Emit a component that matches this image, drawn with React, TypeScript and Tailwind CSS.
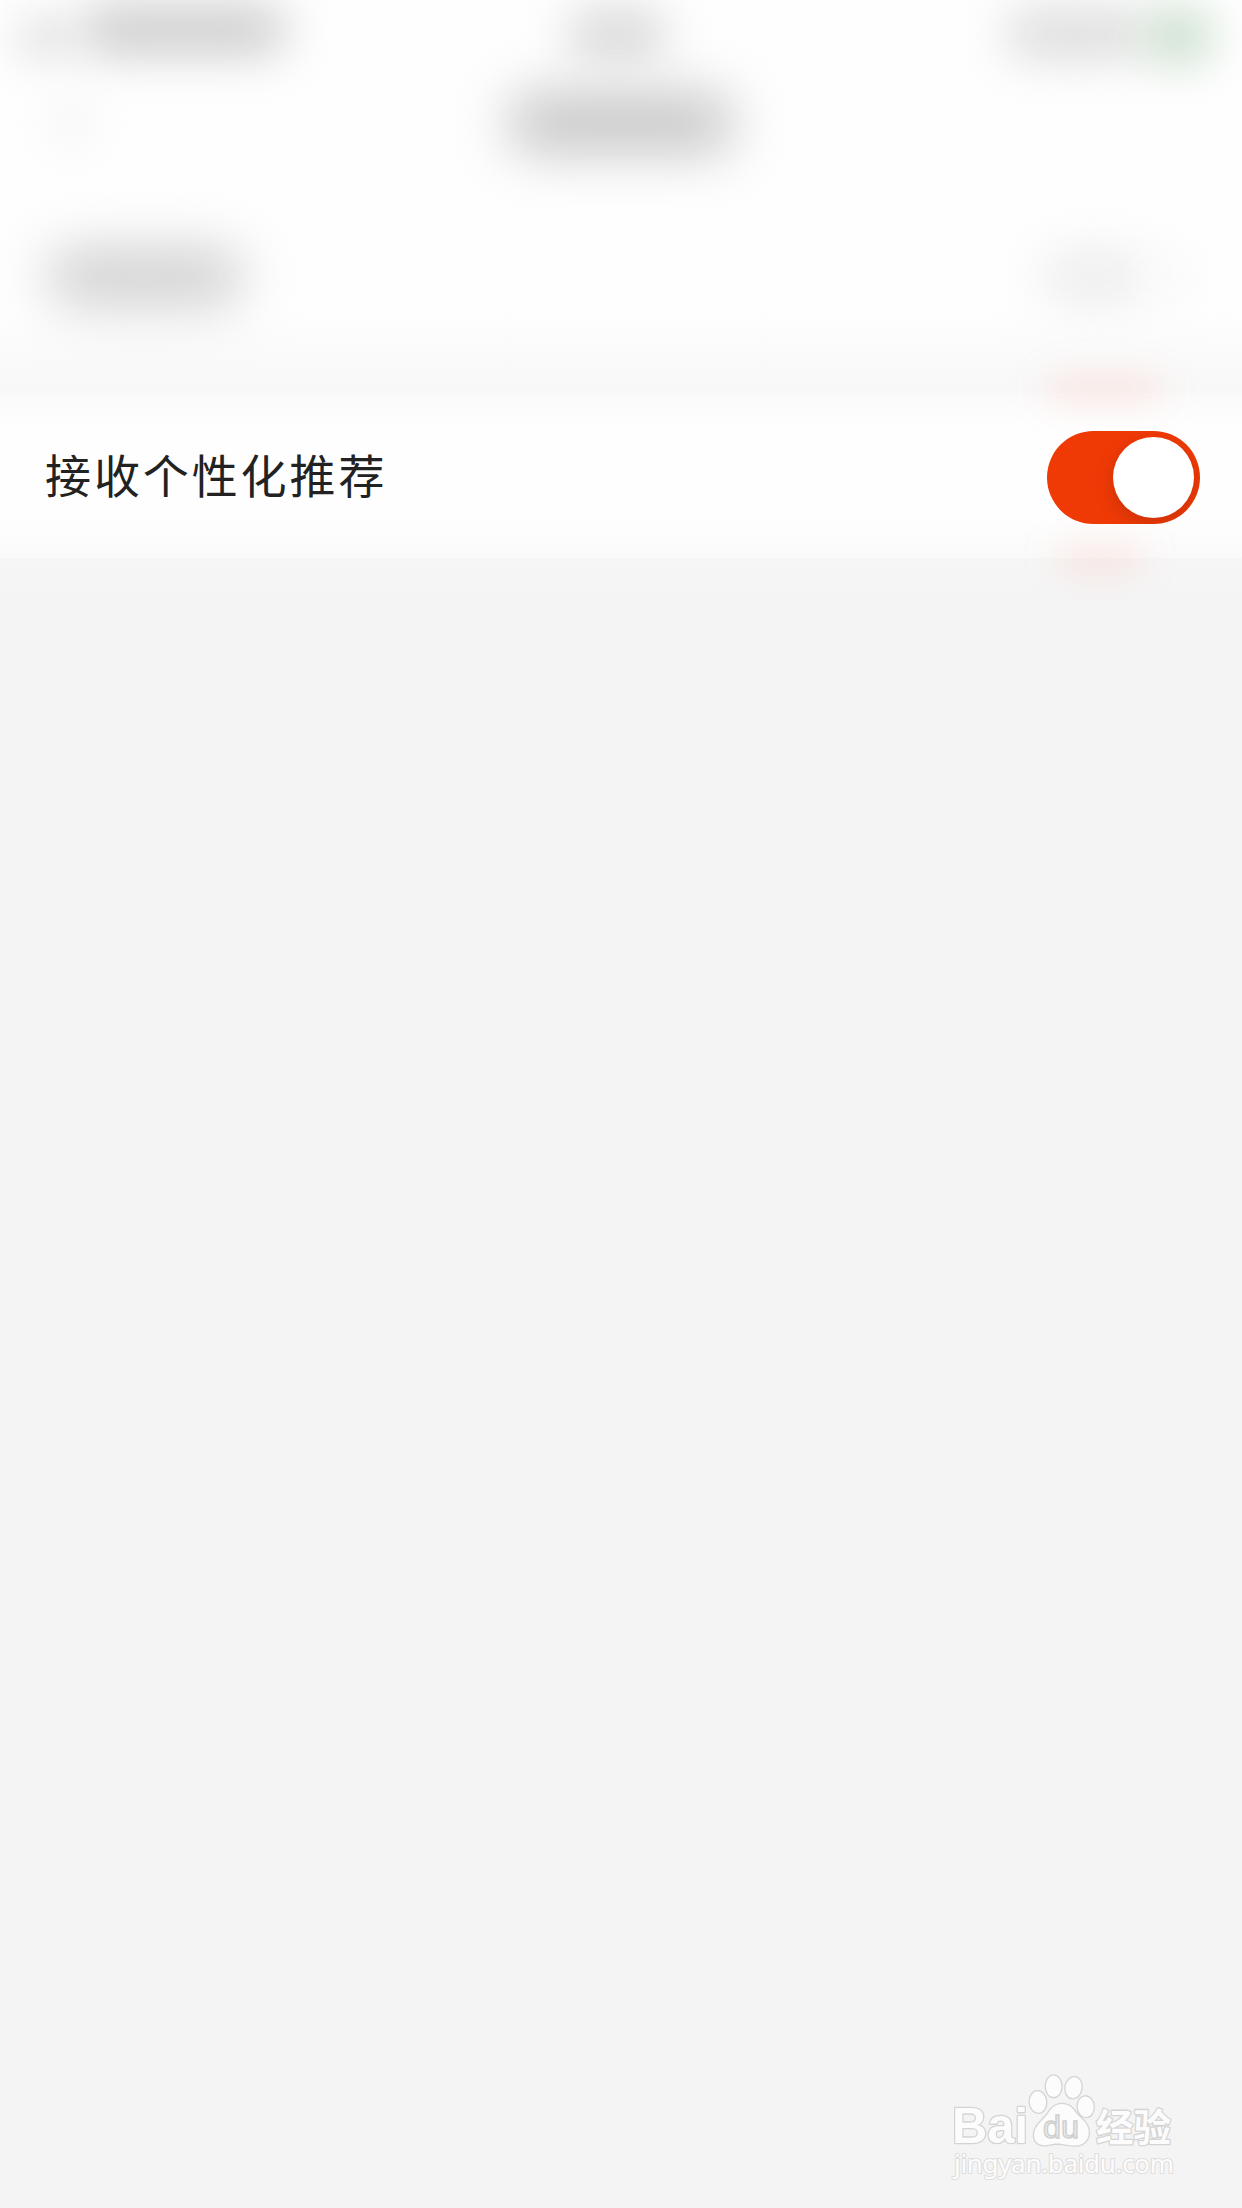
import React, { useState } from 'react';

interface ToggleProps {
  checked: boolean;
  onChange: (checked: boolean) => void;
}

const Toggle: React.FC<ToggleProps> = ({ checked, onChange }) => (
  <button
    type="button"
    role="switch"
    aria-checked={checked}
    onClick={() => onChange(!checked)}
    className={`flex h-[93px] w-[153px] shrink-0 items-center overflow-hidden rounded-full p-1.5 ${
      checked ? 'justify-end bg-[#f03a06]' : 'justify-start bg-gray-300'
    }`}
  >
    <span className="size-[81px] rounded-full bg-white shadow-[0_6px_20px_rgba(0,0,0,0.16)]" />
  </button>
);

const StatusBar = () => (
  <div className="flex h-[60px] items-start justify-between pr-6 pl-4">
    <div className="flex w-[420px] items-center gap-2 pt-1">
      <div className="mt-4 h-9 w-14 rounded-full bg-[#dedede] blur-[22px]" />
      <div className="h-11 w-[206px] rounded-3xl bg-[#c6c6c6] blur-[24px]" />
    </div>
    <div className="mt-3 h-11 w-[98px] rounded-3xl bg-[#d2d2d2] blur-[24px]" />
    <div className="flex w-[420px] justify-end pt-3">
      <div className="h-11 w-[140px] rounded-3xl bg-[#d8d8d8] blur-[24px]" />
      <div className="mr-2 h-12 w-16 rounded-3xl bg-[#bcd6bf] blur-[24px]" />
    </div>
  </div>
);

const TitleBar = () => (
  <div className="grid h-[126px] grid-cols-3 items-center px-12">
    <div className="h-12 w-12 rounded-full bg-[#f6f6f6] blur-[22px]" />
    <div className="h-[58px] w-[224px] justify-self-center rounded-3xl bg-[#c4c4c4] blur-[27px]" />
  </div>
);

const BlurredRow = () => (
  <div className="flex h-[182px] items-center justify-between pr-[50px] pl-[48px]">
    <div className="h-[54px] w-[194px] rounded-3xl bg-[#cdcdcd] blur-[27px]" />
    <div className="flex items-center">
      <div className="h-11 w-[100px] rounded-3xl bg-[#e9e9e9] blur-[25px]" />
      <div className="h-10 w-12 rounded-full bg-[#f9f9f9] blur-[20px]" />
    </div>
  </div>
);

const Watermark = () => (
  <svg width="240" height="128" viewBox="0 0 240 128" aria-label="Baidu">
    <g fill="#fcfcfc" stroke="#d4d4d4" strokeWidth="2.6" paintOrder="stroke" strokeLinejoin="round">
      <text x="10" y="73" fontSize="50" fontWeight="700" textLength="76" lengthAdjust="spacingAndGlyphs" className="font-['Liberation_Sans',sans-serif]">Bai</text>
      <ellipse cx="96" cy="32" rx="8.2" ry="10.7" transform="rotate(-5 96 32)" />
      <ellipse cx="111.6" cy="16.3" rx="7.8" ry="10.8" />
      <ellipse cx="131.5" cy="17.7" rx="8" ry="10.5" transform="rotate(10 131.5 17.7)" />
      <ellipse cx="143.7" cy="36.7" rx="8" ry="10.3" transform="rotate(-5 143.7 36.7)" />
      <path d="M120 34c-6 0-10 3-13 8-4 7-15 13-15 23 0 8 6 11 13 10 6-1 10-2 15-1 7 1 14 3 20 0 6-3 8-10 6-16-2-8-10-11-14-18-3-4-7-6-12-6Z" />
      <text x="154" y="71" fontSize="38" fontWeight="700" textLength="75" lengthAdjust="spacingAndGlyphs" className="font-['Noto_Sans_CJK_SC',sans-serif]">经验</text>
      <text x="12" y="103" fontSize="26" stroke="#dedede" strokeWidth="2.2" textLength="220" className="font-['Noto_Sans',sans-serif]">jingyan.baidu.com</text>
    </g>
    <text x="101" y="68" fontSize="31" fill="#ececec" stroke="#cfcfcf" strokeWidth="1.4" textLength="36" lengthAdjust="spacingAndGlyphs" className="font-['Liberation_Sans',sans-serif]">du</text>
  </svg>
);

export default function App() {
  const [recommend, setRecommend] = useState(true);

  return (
    <div className="flex h-[2208px] w-[1242px] flex-col overflow-hidden bg-[#f4f4f4] font-['Noto_Sans_CJK_SC',sans-serif]">
      <header className="h-[393px] overflow-hidden bg-[linear-gradient(to_bottom,#fefefe_310px,#f9f9f9_370px,#f8f8f8_393px)]">
        <StatusBar />
        <TitleBar />
        <BlurredRow />
      </header>

      <div className="relative flex h-[165px] items-center justify-between bg-[linear-gradient(to_bottom,#fafafa,#fefefe_32px,#fefefe_125px,#fafafa)] pr-[42px] pl-[45px]">
        {/* glow left by the switch above and below the row */}
        <div className="absolute -top-4 right-[80px] h-6 w-[116px] rounded-full bg-[#ff8a78]/20 blur-[18px]" />
        <div className="absolute right-[98px] -bottom-3 h-6 w-[88px] rounded-full bg-[#ff8a78]/20 blur-[18px]" />
        <span className="relative pb-1.5 text-[46px] leading-none tracking-[2.9px] text-[#222]">接收个性化推荐</span>
        <div className="relative flex pt-1">
          <Toggle checked={recommend} onChange={setRecommend} />
        </div>
      </div>

      <main className="flex flex-1 items-end justify-end bg-[linear-gradient(to_bottom,#f6f6f6,#f4f4f4_50px)] pr-[60px] pb-[10px]">
        <Watermark />
      </main>
    </div>
  );
}
